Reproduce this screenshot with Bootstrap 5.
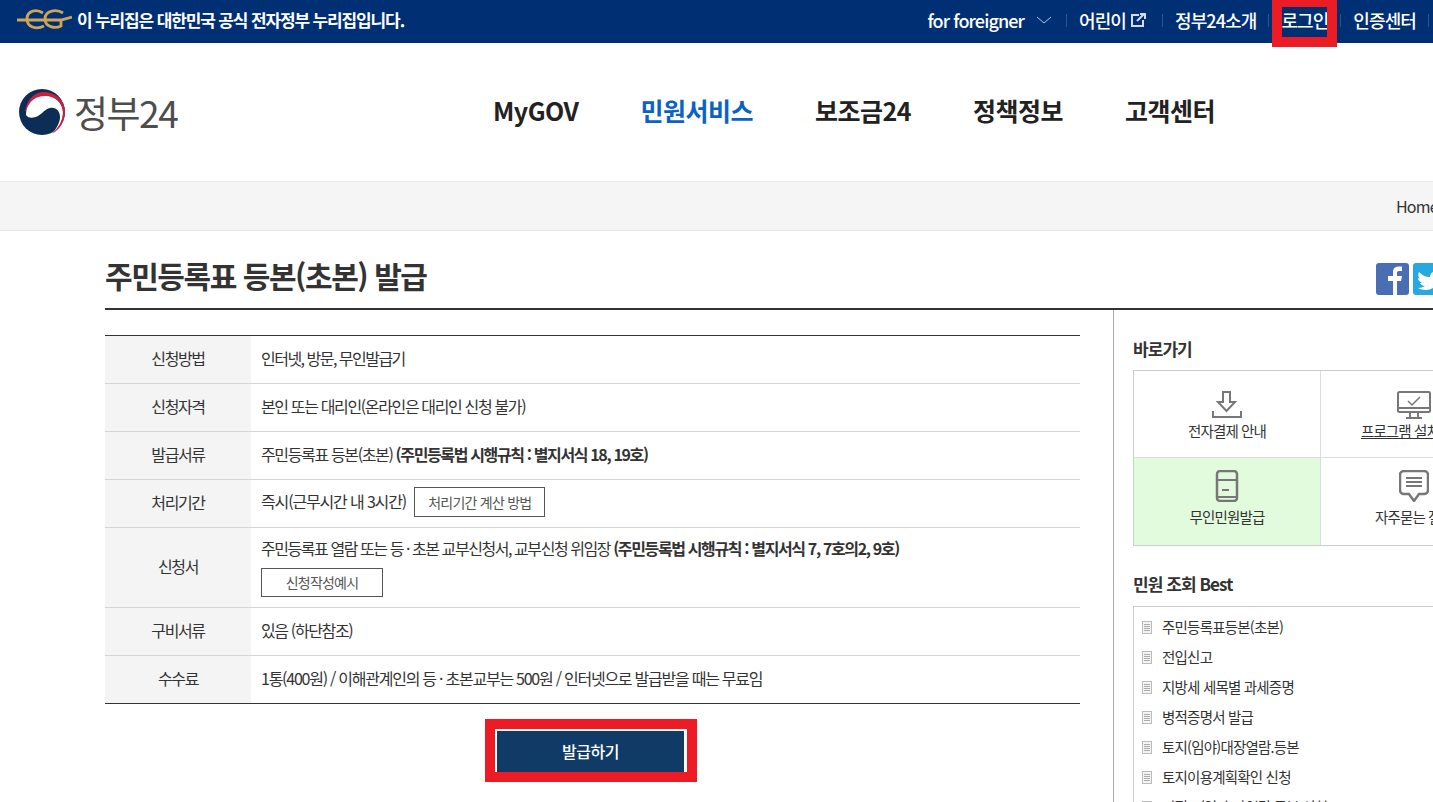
<!DOCTYPE html>
<html lang="ko">
<head>
<meta charset="utf-8">
<title>주민등록표 등본(초본) 발급</title>
<link href="https://cdn.jsdelivr.net/npm/bootstrap@5.3.0/dist/css/bootstrap.min.css" rel="stylesheet">
<style>
html,body{height:802px;overflow:hidden}
body{font-family:"Noto Sans CJK KR","Noto Sans",sans-serif;color:#333;background:#fff;position:relative;width:1433px;letter-spacing:-.05em}
.topstrip{height:43px;background:#002f74;color:#fff;padding:0 4px 3px 17px;flex-wrap:nowrap}
.govline{font-size:17px;font-weight:700;margin-left:5px;letter-spacing:-.067em;white-space:nowrap}
.toplinks{font-size:18px;font-weight:500;white-space:nowrap;letter-spacing:-.05em}
.toplink{padding:0 13px 0 12px;position:relative;display:flex;align-items:center}
.toplink::after{content:"";position:absolute;right:0;top:50%;margin-top:-6px;height:13px;width:1px;background:#2b5491}
.chevgap{margin:0 2px 0 12px}
.extgap{margin:0 4px 0 5px}
.mainhead{height:138px;padding-left:19px}
.brandword{font-size:37px;font-weight:400;color:#4d4d4d;letter-spacing:-.04em;margin-left:8px;line-height:1;white-space:nowrap}
.brandlink{width:159px;flex:none}
.brandlink svg{flex:none}
.mainmenu{margin-left:315px;gap:62px;font-size:25px;font-weight:700;color:#222;letter-spacing:-.02em;padding-bottom:2px}
.menuactive{color:#0a63c4}
.crumbbar{height:50px;background:#f6f5f5;border-top:1px solid #e6e6e6;border-bottom:1px solid #e6e6e6;padding-left:1396px;font-size:16px;white-space:nowrap;color:#333}
.pagebody{margin-left:105px;width:1400px}
.pagetitle{height:79px;border-bottom:2px solid #333;margin:0;padding-top:10px}
.pagetitle h1{font-size:30px;font-weight:700;margin:0;color:#333;letter-spacing:-.048em;line-height:1}
.sharebox{gap:4px;margin-left:949px;margin-top:8px;padding-left:1px}
.leftcol{width:975px;padding-top:25px}
.infotable{width:975px;margin:0;border-top:1px solid #333;border-bottom:1px solid #333;font-size:16px;--bs-table-color:#333;letter-spacing:-.085em}
.infotable th,.infotable td{border-bottom:1px solid #d4d4d4;padding:0 0 3px 10px;vertical-align:middle;height:48px}
.infotable tr:last-child th,.infotable tr:last-child td{border-bottom:0}
.infotable th{width:146px;background:#f4f4f4;font-weight:400;text-align:center;padding:0 0 3px}
.infotable .tallrow{height:80px;padding-bottom:2px}
.trackwide{letter-spacing:-.072em}
.trackwider{letter-spacing:-.078em}
.tracknarrow{letter-spacing:-.095em}
.trackform{letter-spacing:-.09em}
.trackform b{letter-spacing:-.085em}
.linebtn{display:inline-block;border:1px solid #555;background:#fff;color:#555;font-size:14px;padding:0;height:30px;line-height:28px;text-align:center;border-radius:0;letter-spacing:-.055em}
.btncalc{width:131px;margin-left:5px}
.btnform{width:122px;height:29px;line-height:27px;margin-top:8px;display:block;font-size:14px}
.issuewrap{margin-top:15px;width:975px;padding-right:3px}
.issueframe{width:212px;height:63px;border:10px solid #ed1c24;background:#fff;padding:2px 3px 0 2px}
.issuebtn{width:100%;height:100%;display:flex;align-items:center;justify-content:center;background:#0f3b66;color:#fff;font-size:16px;font-weight:500;border:0;border-radius:0;padding:0 0 2px;letter-spacing:-.03em}
.issuebtn:hover{background:#0f3b66;color:#fff}
.sidecol{margin-left:33px;border-left:1px solid #aaa;padding:28px 0 0 19px;width:400px;flex:none}
.sidehead{font-size:17px;font-weight:700;margin:0 0 10px;line-height:22px;color:#333;letter-spacing:-.055em}
.sidehead.headbest{margin-bottom:11px}
.quickgrid{display:grid;grid-template-columns:187px 187px;grid-auto-rows:87px;border:1px solid #ccc;width:375px;margin-bottom:27px}
.quickcell{border-right:1px solid #ddd;border-bottom:1px solid #ddd;font-size:14.500px;color:#333;text-align:center;padding-top:20px;letter-spacing:-.06em;line-height:22px;white-space:nowrap}
.quickcell svg{display:block;margin:0 auto 1px}
.quickcell.rowlast{border-bottom:0;padding-top:12px}
.quickcell.rowlast svg{margin-bottom:4px}
.quickon{background:#e2fbdd}
.bestbox{border:1px solid #ccc;border-bottom:0;padding:5px 0 0 8px;width:375px;list-style:none;margin:0;font-size:14.5px;letter-spacing:-.055em}
.bestbox li{height:30px;line-height:30px;display:flex;align-items:center;gap:10px;white-space:nowrap}
.redmark{position:absolute;left:1272px;top:0;width:65px;height:47px;border:10px solid #ed1c24;border-top-width:7px;pointer-events:none}
</style>
</head>
<body>
<div class="topstrip d-flex align-items-center justify-content-between">
  <div class="d-flex align-items-center">
    <svg width="55" height="24" viewBox="0 0 55 24" aria-hidden="true"><g fill="none" stroke="#d0a654" stroke-width="2.800"><path d="M26 5C20 1 10 2 10 11c0 8 9 11 17 7"/><path d="M46 5C40 1 28 2 28 11c0 8 10 10 16 7v-7"/><path d="M0 12H44L55 9"/></g></svg>
    <span class="govline">이 누리집은 대한민국 공식 전자정부 누리집입니다.</span>
  </div>
  <div class="toplinks d-flex align-items-center">
    <a class="toplink text-white text-decoration-none" href="#">for foreigner<svg class="chevgap" width="16" height="8" viewBox="0 0 16 8"><path d="M1 1l7 6 7-6" fill="none" stroke="#b9c6dc" stroke-width="1"/></svg></a>
    <a class="toplink text-white text-decoration-none" href="#">어린이<svg class="extgap" width="15" height="14" viewBox="0 0 15 14"><path d="M8 2H1v11h11V7" fill="none" stroke="#d5dcea" stroke-width="2"/><path d="M6 8l7-7M9 1h5v5" fill="none" stroke="#d5dcea" stroke-width="2"/></svg></a>
    <a class="toplink text-white text-decoration-none" href="#">정부24소개</a>
    <a class="toplink text-white text-decoration-none" href="#">로그인</a>
    <a class="toplink text-white text-decoration-none" href="#">인증센터</a>
  </div>
</div>
<div class="redmark"></div>

<header class="mainhead d-flex align-items-center">
  <a class="brandlink d-flex align-items-center text-decoration-none" href="#">
    <svg width="47" height="47" viewBox="0 0 47 47" aria-hidden="true">
      <circle cx="23" cy="23" r="23" fill="#0c2d55"/>
      <path d="M7 26C7 13 15 6 25 6c11 0 19 8 19 18 0 9-5 16-11 21 5-6 8-12 8-17 0-6-4-10-10-9-5 1-7 5-12 8-4 2-9 3-12-1z" fill="#fff"/>
      <path d="M6 22C8 10 16 3 25 3c12 0 21 9 21 20 0 10-6 18-13 22 6-6 11-13 11-22 0-9-8-16-18-16C17 7 10 12 7 22z" fill="#c8203f"/>
    </svg>
    <span class="brandword">정부24</span>
  </a>
  <nav class="mainmenu d-flex text-nowrap">
    <span>MyGOV</span><span class="menuactive">민원서비스</span><span>보조금24</span><span>정책정보</span><span>고객센터</span>
  </nav>
</header>

<div class="crumbbar d-flex align-items-center">Home</div>

<div class="pagebody">
  <div class="pagetitle d-flex align-items-center justify-content-between">
    <h1 class="text-nowrap">주민등록표 등본(초본) 발급</h1>
    <div class="sharebox d-flex flex-grow-1">
      <svg width="33" height="32" viewBox="0 0 33 32" aria-hidden="true"><rect width="33" height="32" rx="3" fill="#4a6eb3"/><path d="M17 32V18h-5v-5h5V9c0-5 3-6 9-5.500v4.500h-3c-2 0-2 1-2 2V13h5l-1 5h-4v14z" fill="#fff"/></svg>
      <svg width="33" height="32" viewBox="0 0 33 32" aria-hidden="true"><rect width="33" height="32" rx="3" fill="#27a8e0"/><path d="M6 9c4 4 7 5 11 5 0-5 5-7 8-4l3-1-2 3 2 0-2 2c0 8-6 13-13 13-3 0-6-1-8-2 3 0 5-1 7-2-3 0-4-2-5-3h2c-2-1-4-3-4-5l2 .5C5 14 5 11 6 9z" fill="#fff"/></svg>
    </div>
  </div>
  <div class="d-flex">
    <main class="leftcol">
      <table class="table infotable">
        <tbody>
          <tr><th scope="row">신청방법</th><td class="tracknarrow">인터넷, 방문, 무인발급기</td></tr>
          <tr><th scope="row">신청자격</th><td>본인 또는 대리인(온라인은 대리인 신청 불가)</td></tr>
          <tr><th scope="row">발급서류</th><td>주민등록표 등본(초본) <b>(주민등록법 시행규칙 : 별지서식 18, 19호)</b></td></tr>
          <tr><th scope="row">처리기간</th><td class="trackwide">즉시(근무시간 내 3시간) <a class="linebtn btncalc text-decoration-none" href="#">처리기간 계산 방법</a></td></tr>
          <tr><th scope="row">신청서</th><td class="tallrow trackform">주민등록표 열람 또는 등 · 초본 교부신청서, 교부신청 위임장 <b>(주민등록법 시행규칙 : 별지서식 7, 7호의2, 9호)</b><a class="linebtn btnform text-decoration-none" href="#">신청작성예시</a></td></tr>
          <tr><th scope="row">구비서류</th><td>있음 (하단참조)</td></tr>
          <tr><th scope="row">수수료</th><td class="trackwider">1통(400원) / 이해관계인의 등 · 초본교부는 500원 / 인터넷으로 발급받을 때는 무료임</td></tr>
        </tbody>
      </table>
      <div class="issuewrap d-flex justify-content-center">
        <div class="issueframe"><a class="issuebtn btn" href="#">발급하기</a></div>
      </div>
    </main>
    <aside class="sidecol">
      <h2 class="sidehead">바로가기</h2>
      <div class="quickgrid">
        <a class="quickcell text-decoration-none" href="#"><svg width="30" height="28" viewBox="0 0 30 28"><path d="M11 1h7v10h5l-8.500 9L6 11h5z" fill="none" stroke="#777" stroke-width="2"/><path d="M1 20v6h28v-6" fill="none" stroke="#777" stroke-width="2"/></svg>전자결제 안내</a>
        <a class="quickcell text-decoration-underline" href="#"><svg width="34" height="28" viewBox="0 0 34 28"><rect x="1" y="1" width="32" height="20" rx="1.500" fill="none" stroke="#777" stroke-width="2"/><path d="M11 10l4 4 8-8" fill="none" stroke="#777" stroke-width="1.500"/><path d="M1 17h32M13 21v5M21 21v5M9 27h16" stroke="#777" stroke-width="2" fill="none"/></svg>프로그램 설치 안내</a>
        <a class="quickcell rowlast quickon text-decoration-none" href="#"><svg width="24" height="32" viewBox="0 0 24 32"><rect x="2" y="1" width="20" height="30" rx="3" fill="none" stroke="#777" stroke-width="2.500"/><path d="M2 10h20M2 27h20M7 20h7" stroke="#777" stroke-width="2" fill="none"/></svg>무인민원발급</a>
        <a class="quickcell rowlast text-decoration-none" href="#"><svg width="30" height="32" viewBox="0 0 30 32"><path d="M5 1h20a4 4 0 0 1 4 4v15a4 4 0 0 1-4 4h-5l-5 7-5-7H5a4 4 0 0 1-4-4V5a4 4 0 0 1 4-4z" fill="none" stroke="#777" stroke-width="2.500"/><path d="M7 8h16M7 12h16M7 16h16" stroke="#777" stroke-width="2"/></svg>자주묻는 질문</a>
      </div>
      <h2 class="sidehead headbest">민원 조회 Best</h2>
      <ul class="bestbox">
        <li><svg width="10" height="13" viewBox="0 0 10 13"><rect x=".5" y=".5" width="9" height="12" fill="#f4f4f4" stroke="#bbb"/><path d="M2 3.500h6M2 5.500h6M2 7.500h6M2 9.500h6" stroke="#aaa"/></svg>주민등록표등본(초본)</li>
        <li><svg width="10" height="13" viewBox="0 0 10 13"><rect x=".5" y=".5" width="9" height="12" fill="#f4f4f4" stroke="#bbb"/><path d="M2 3.500h6M2 5.500h6M2 7.500h6M2 9.500h6" stroke="#aaa"/></svg>전입신고</li>
        <li><svg width="10" height="13" viewBox="0 0 10 13"><rect x=".5" y=".5" width="9" height="12" fill="#f4f4f4" stroke="#bbb"/><path d="M2 3.500h6M2 5.500h6M2 7.500h6M2 9.500h6" stroke="#aaa"/></svg>지방세 세목별 과세증명</li>
        <li><svg width="10" height="13" viewBox="0 0 10 13"><rect x=".5" y=".5" width="9" height="12" fill="#f4f4f4" stroke="#bbb"/><path d="M2 3.500h6M2 5.500h6M2 7.500h6M2 9.500h6" stroke="#aaa"/></svg>병적증명서 발급</li>
        <li><svg width="10" height="13" viewBox="0 0 10 13"><rect x=".5" y=".5" width="9" height="12" fill="#f4f4f4" stroke="#bbb"/><path d="M2 3.500h6M2 5.500h6M2 7.500h6M2 9.500h6" stroke="#aaa"/></svg>토지(임야)대장열람.등본</li>
        <li><svg width="10" height="13" viewBox="0 0 10 13"><rect x=".5" y=".5" width="9" height="12" fill="#f4f4f4" stroke="#bbb"/><path d="M2 3.500h6M2 5.500h6M2 7.500h6M2 9.500h6" stroke="#aaa"/></svg>토지이용계획확인 신청</li>
        <li><svg width="10" height="13" viewBox="0 0 10 13"><rect x=".5" y=".5" width="9" height="12" fill="#f4f4f4" stroke="#bbb"/><path d="M2 3.500h6M2 5.500h6M2 7.500h6M2 9.500h6" stroke="#aaa"/></svg>지적도(임야도)열람.등본 신청</li>
      </ul>
    </aside>
  </div>
</div>
<script src="https://cdn.jsdelivr.net/npm/bootstrap@5.3.0/dist/js/bootstrap.bundle.min.js"></script>
</body>
</html>
